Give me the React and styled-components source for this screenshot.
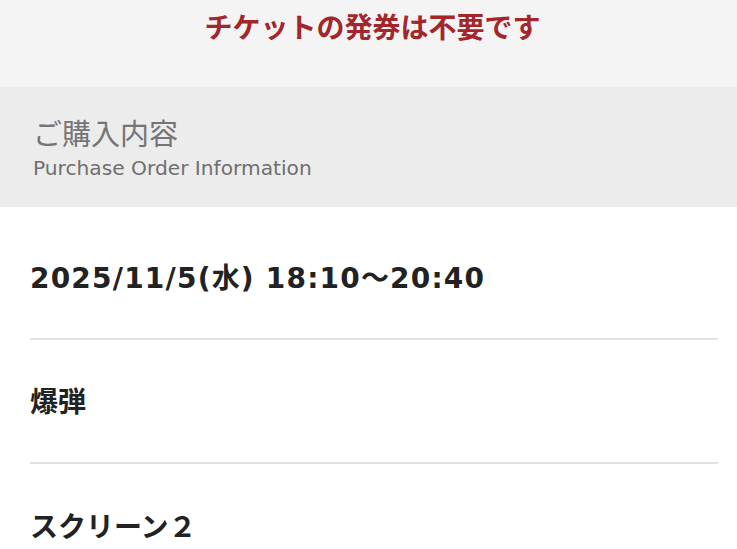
import React from "react";
import styled, { createGlobalStyle } from "styled-components";

const Global = createGlobalStyle`
  html, body { margin: 0; padding: 0; background: #ffffff; overflow: hidden; }
  body { font-family: "DejaVu Sans", "Noto Sans CJK JP", sans-serif; }
`;

const Page = styled.div`
  width: 737px;
  height: 549px;
  background: #ffffff;
  overflow: hidden;
`;

const Notice = styled.div`
  background: #f4f4f4;
  height: 87px;
  display: flex;
  justify-content: center;
  padding: 8px 0 0 8px;
  box-sizing: border-box;
`;

const NoticeText = styled.div`
  color: #a3272a;
  font-family: "Noto Sans CJK JP", sans-serif;
  font-weight: 700;
  font-size: 28px;
  line-height: 36px;
`;

const SectionHead = styled.div`
  background: #ececec;
  height: 120px;
  box-sizing: border-box;
  padding: 27px 33px 0;
`;

const HeadTitle = styled.div`
  color: #757575;
  font-family: "Noto Sans CJK JP", sans-serif;
  font-weight: 400;
  font-size: 29px;
  line-height: 36px;
`;

const HeadSub = styled.div`
  color: #6f6f6f;
  font-family: "DejaVu Sans", sans-serif;
  font-size: 20.2px;
  line-height: 24px;
  margin-top: 6px;
`;

const List = styled.div`
  padding: 9px 19px 0 30px;
`;

const Row = styled.div`
  height: 124px;
  display: flex;
  align-items: center;
  border-bottom: ${(p) => (p.last ? "none" : "2px solid #e2e2e2")};
  box-sizing: border-box;
`;

const RowText = styled.div`
  color: #222222;
  font-family: "DejaVu Sans", "Noto Sans CJK JP", sans-serif;
  font-weight: 700;
  font-size: 28px;
  line-height: 36px;
  letter-spacing: ${(p) => p.spacing || "1.2px"};
  padding-top: 4px;
`;

export default function App() {
  return (
    <Page>
      <Global />
      <Notice>
        <NoticeText>チケットの発券は不要です</NoticeText>
      </Notice>
      <SectionHead>
        <HeadTitle>ご購入内容</HeadTitle>
        <HeadSub>Purchase Order Information</HeadSub>
      </SectionHead>
      <List>
        <Row>
          <RowText>2025/11/5(水) 18:10～20:40</RowText>
        </Row>
        <Row>
          <RowText spacing="0px">爆弾</RowText>
        </Row>
        <Row last>
          <RowText spacing="0px">スクリーン２</RowText>
        </Row>
      </List>
    </Page>
  );
}
